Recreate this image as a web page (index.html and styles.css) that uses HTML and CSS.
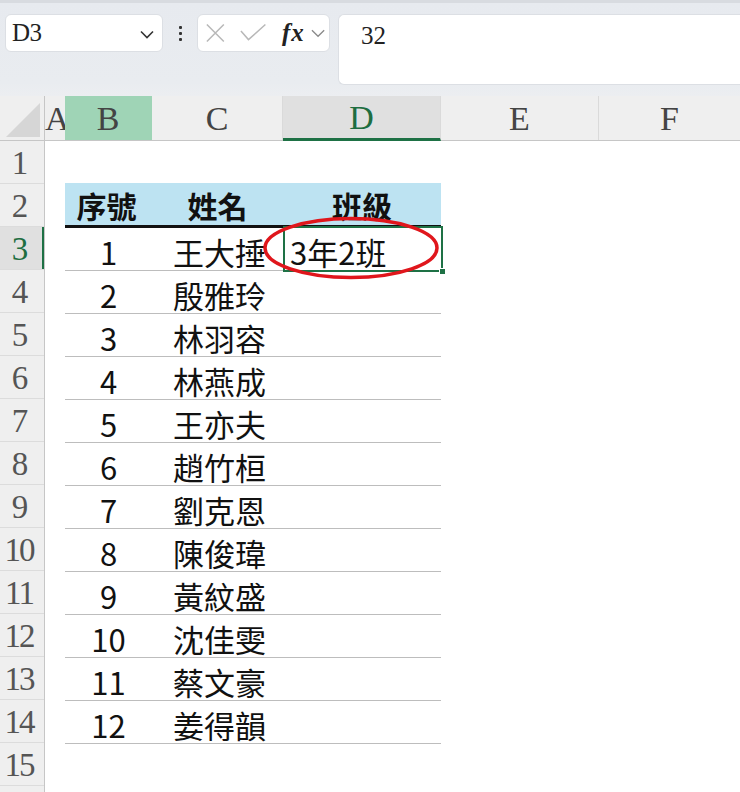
FILE: index.html
```html
<!DOCTYPE html>
<html lang="zh-Hant">
<head>
<meta charset="utf-8">
<title>Sheet</title>
<link rel="stylesheet" href="styles.css">
</head>
<body>
<div class="app">
  <div class="toolbar">
    <div class="namebox">
      <span class="ref">D3</span>
      <svg class="chev" width="14" height="9" viewBox="0 0 14 9"><path d="M1 1.5 L7 7.5 L13 1.5" fill="none" stroke="#333" stroke-width="1.6"/></svg>
    </div>
    <div class="dots"><i></i><i></i><i></i></div>
    <div class="fbtns">
      <svg width="22" height="20" viewBox="0 0 22 20"><path d="M2 1 L20 19 M20 1 L2 19" stroke="#b8b8b8" stroke-width="1.6" fill="none"/></svg>
      <svg width="28" height="20" viewBox="0 0 28 20"><path d="M1 8 L9 17 L27 1" stroke="#b8b8b8" stroke-width="1.6" fill="none"/></svg>
      <span class="fx">fx</span>
      <svg width="15" height="9" viewBox="0 0 15 9"><path d="M1 1 L7.5 7.5 L14 1" fill="none" stroke="#8a8a8a" stroke-width="1.4"/></svg>
    </div>
    <div class="formula">32</div>
  </div>

  <div class="colheads">
    <div class="corner"><svg width="45" height="45" viewBox="0 0 45 45"><path d="M6 41 L40 41 L40 7 Z" fill="#d6d6d6"/></svg></div>
    <div class="ch ch-a">A</div>
    <div class="ch ch-b sel-fill">B</div>
    <div class="ch ch-c">C</div>
    <div class="ch ch-d active">D</div>
    <div class="ch ch-e">E</div>
    <div class="ch ch-f">F</div>
  </div>

  <div class="grid">
    <div class="rowheads">
      <div class="rh">1</div>
      <div class="rh">2</div>
      <div class="rh active">3</div>
      <div class="rh">4</div>
      <div class="rh">5</div>
      <div class="rh">6</div>
      <div class="rh">7</div>
      <div class="rh">8</div>
      <div class="rh">9</div>
      <div class="rh">10</div>
      <div class="rh">11</div>
      <div class="rh">12</div>
      <div class="rh">13</div>
      <div class="rh">14</div>
      <div class="rh">15</div>
      <div class="rh"></div>
    </div>
    <div class="cells">
      <div class="table">
        <div class="th">序號</div><div class="th">姓名</div><div class="th">班級</div>
        <div class="td num">1</div><div class="td name">王大捶</div>
        <div class="td cls current">3年2班
          <span class="selbox"><span class="handle"></span></span>
          <svg class="ring" width="180" height="64" viewBox="0 0 180 64"><ellipse cx="90" cy="32" rx="86" ry="29.5" fill="none" stroke="#e0161c" stroke-width="3.5"/></svg>
        </div>
        <div class="td num">2</div><div class="td name">殷雅玲</div><div class="td"></div>
        <div class="td num">3</div><div class="td name">林羽容</div><div class="td"></div>
        <div class="td num">4</div><div class="td name">林燕成</div><div class="td"></div>
        <div class="td num">5</div><div class="td name">王亦夫</div><div class="td"></div>
        <div class="td num">6</div><div class="td name">趙竹桓</div><div class="td"></div>
        <div class="td num">7</div><div class="td name">劉克恩</div><div class="td"></div>
        <div class="td num">8</div><div class="td name">陳俊瑋</div><div class="td"></div>
        <div class="td num">9</div><div class="td name">黃紋盛</div><div class="td"></div>
        <div class="td num">10</div><div class="td name">沈佳雯</div><div class="td"></div>
        <div class="td num">11</div><div class="td name">蔡文豪</div><div class="td"></div>
        <div class="td num">12</div><div class="td name">姜得韻</div><div class="td"></div>
      </div>
    </div>
  </div>
</div>
</body>
</html>
```
FILE: styles.css
```css
* { box-sizing: border-box; }
html, body { margin: 0; padding: 0; }
body {
  width: 740px;
  height: 792px;
  overflow: hidden;
  background: #ffffff;
  font-family: "Noto Sans CJK TC", "Noto Sans", sans-serif;
}
.app { width: 740px; }

.toolbar {
  height: 96px;
  background: linear-gradient(#e7eaef, #e9ecf0 85%, #eceef1);
  border-top: 3px solid #d8dbe0;
  display: flex;
  align-items: flex-start;
  padding: 11px 0 0 5px;
}
.namebox {
  width: 158px;
  height: 38px;
  background: #fff;
  border: 1px solid #dcdfe4;
  border-radius: 6px;
  display: flex;
  align-items: center;
  justify-content: space-between;
  padding: 0 8px 0 6px;
}
.ref {
  font-family: "Liberation Serif", serif;
  font-size: 25px;
  color: #222;
  letter-spacing: -0.5px;
}
.chev { margin-top: 2px; }
.dots {
  width: 34px;
  height: 38px;
  display: flex;
  flex-direction: column;
  align-items: center;
  justify-content: center;
  gap: 3px;
}
.dots i {
  display: block;
  width: 3px;
  height: 3px;
  border-radius: 1px;
  background: #333;
}
.fbtns {
  width: 133px;
  height: 38px;
  background: #fff;
  border: 1px solid #dcdfe4;
  border-radius: 6px;
  display: flex;
  align-items: center;
  padding: 0 4px 0 7px;
  gap: 0;
}
.fbtns svg:nth-child(1) { margin-right: 14px; }
.fbtns svg:nth-child(2) { margin-right: 16px; }
.fx {
  font-family: "Liberation Serif", serif;
  font-style: italic;
  font-weight: bold;
  font-size: 25px;
  color: #222;
  margin-right: 6px;
  line-height: 1;
  margin-top: -2px;
  letter-spacing: 1px;
}
.formula {
  margin-left: 8px;
  flex: 1;
  height: 71px;
  background: #fff;
  border: 1px solid #dcdfe4;
  border-right: none;
  border-radius: 6px 0 0 6px;
  font-family: "Liberation Serif", serif;
  font-size: 25px;
  color: #222;
  padding: 6px 0 0 22px;
  line-height: 30px;
}

.colheads {
  height: 45px;
  display: flex;
  background: #efefef;
  border-bottom: 1px solid #c6c6c6;
}
.corner {
  width: 45px;
  height: 44px;
  border-right: 1px solid #c6c6c6;
  flex: none;
}
.corner svg { display: block; }
.ch {
  flex: none;
  height: 44px;
  border-right: 1px solid #dadada;
  font-family: "Liberation Serif", serif;
  font-size: 34px;
  color: #444;
  display: flex;
  align-items: center;
  justify-content: center;
  overflow: hidden;
  line-height: 1;
  padding-top: 2px;
}
.ch-a { width: 20px; justify-content: flex-start; padding-left: 0; border-right: none; }
.ch-b { width: 87px; }
.ch-c { width: 131px; }
.ch-d { width: 158px; }
.ch-e { width: 158px; }
.ch-f { width: 141px; border-right: none; }
.sel-fill { background: #9fd4b6; border-right-color: #9fd4b6; }
.ch.active {
  background: #e0e0e0;
  color: #1e6e41;
  border-bottom: 3px solid #1e7145;
  height: 45px;
  margin-bottom: -1px;
}

.grid { display: flex; }
.rowheads {
  width: 45px;
  flex: none;
  background: #efefef;
  border-right: 1px solid #c6c6c6;
}
.rh {
  height: 43px;
  border-bottom: 1px solid #dcdcdc;
  font-family: "Liberation Serif", serif;
  font-size: 33px;
  letter-spacing: -2px;
  color: #555;
  display: flex;
  align-items: center;
  justify-content: center;
  padding-right: 6px;
  line-height: 1;
  padding-top: 3px;
}
.rh.active {
  background: #e0e0e0;
  color: #1e6e41;
  box-shadow: inset -2px 0 0 #1e7145;
}

.cells {
  flex: 1;
  padding: 42px 0 0 20px;
}
.table {
  display: grid;
  grid-template-columns: 87px 131px 158px;
  grid-template-rows: 45px;
  grid-auto-rows: 43px;
  width: 376px;
}
.th {
  background: #bde3f2;
  border-bottom: 3px solid #111;
  font-weight: bold;
  font-size: 30px;
  color: #111;
  display: flex;
  align-items: center;
  justify-content: center;
  line-height: 1;
  padding-top: 2px;
}
.th:nth-child(1) { padding-right: 4px; }
.td {
  border-bottom: 1px solid #bdbdbd;
  font-size: 31px;
  color: #111;
  display: flex;
  align-items: center;
  line-height: 1;
  padding-top: 4px;
}
.td.num { justify-content: center; }
.td.name { justify-content: center; padding-left: 4px; }
.td.cls { position: relative; padding-left: 7px; }
.current { border-bottom-color: transparent; }
.selbox {
  position: absolute;
  left: 0;
  top: -2px;
  width: 160px;
  height: 46px;
  border: 2px solid #1e7145;
  pointer-events: none;
}
.handle {
  position: absolute;
  right: -5px;
  bottom: -5px;
  width: 7px;
  height: 7px;
  background: #1e7145;
  border: 1px solid #fff;
}
.ring {
  position: absolute;
  left: -22px;
  top: -12px;
  pointer-events: none;
}
```
